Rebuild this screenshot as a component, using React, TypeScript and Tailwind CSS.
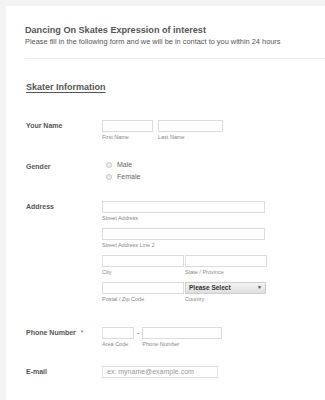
import React from 'react';

const font = { fontFamily: '"Liberation Sans", Arial, sans-serif' };

function Field({ w, label, placeholder }: { w: string; label?: string; placeholder?: string }) {
  return (
    <div className="flex flex-col">
      <div className={`${w} h-[12px] border border-[#dcdcdc] bg-white text-[7px] leading-[10px] px-[4px] text-[#999]`}>
        {placeholder}
      </div>
      {label && <span className="text-[5.5px] leading-[6px] mt-[2px] text-[#888]">{label}</span>}
    </div>
  );
}

function Row({ label, required, children, className }: { label: string; required?: boolean; children: React.ReactNode; className?: string }) {
  return (
    <div className={`flex ${className ?? ''}`}>
      <div className="w-[76px] shrink-0 text-[7px] font-bold text-[#555] leading-[10px] pt-[1px]">
        {label}
        {required && <span className="text-[#e04040] ml-[5px] font-normal">*</span>}
      </div>
      <div>{children}</div>
    </div>
  );
}

export default function App() {
  return (
    <div className="w-[325px] h-[400px] bg-[#f3f3f3] pt-[6px] pl-[6px] overflow-hidden" style={font}>
      <div className="bg-white h-[400px] pl-[19px]">
        <div className="pt-[18px]">
          <h1 className="text-[9.1px] font-bold text-[#555] leading-[12px]">Dancing On Skates Expression of interest</h1>
          <p className="text-[7.4px] text-[#555] leading-[9px] mt-[1px]">
            Please fill in the following form and we will be in contact to you within 24 hours
          </p>
        </div>
        <div className="border-t border-[#eeeeee] mt-[12px]" />
        <div className="mt-[22px] pl-[1px] text-[9px] leading-[12px]">
          <span className="font-bold text-[#555] underline underline-offset-[2px]">Skater Information</span>
        </div>

        <div className="pl-[1px] mt-[27px]">
          <Row label="Your Name">
            <div className="flex gap-[5px]">
              <Field w="w-[51px]" label="First Name" />
              <Field w="w-[65px]" label="Last Name" />
            </div>
          </Row>

          <Row label="Gender" className="mt-[21px]">
            <div className="flex flex-col gap-[3px] pl-[4px] -mt-[1px]">
              {['Male', 'Female'].map((g) => (
                <div key={g} className="flex items-center gap-[5px]">
                  <span className="w-[6px] h-[6px] rounded-full border border-[#c8c8c8] bg-[#eee]" />
                  <span className="text-[7px] text-[#666] leading-[9px]">{g}</span>
                </div>
              ))}
            </div>
          </Row>

          <Row label="Address" className="mt-[20px]">
            <div className="flex flex-col gap-[7px]">
              <Field w="w-[163px]" label="Street Address" />
              <Field w="w-[163px]" label="Street Address Line 2" />
              <div className="flex gap-[1px]">
                <Field w="w-[82px]" label="City" />
                <Field w="w-[82px]" label="State / Province" />
              </div>
              <div className="flex gap-[1px]">
                <Field w="w-[82px]" label="Postal / Zip Code" />
                <div className="flex flex-col">
                  <div className="w-[81px] h-[12px] border border-[#cfcfcf] bg-gradient-to-b from-[#f4f4f4] to-[#dedede] flex items-center justify-between px-[3px]">
                    <span className="text-[6.5px] font-bold text-[#333]">Please Select</span>
                    <span className="text-[5px] text-[#444]">▼</span>
                  </div>
                  <span className="text-[5.5px] leading-[6px] mt-[2px] text-[#888]">Country</span>
                </div>
              </div>
            </div>
          </Row>

          <Row label="Phone Number" required className="mt-[25px]">
            <div className="flex items-start gap-[3px]">
              <Field w="w-[32px]" label="Area Code" />
              <span className="text-[7px] text-[#666] leading-[12px]">-</span>
              <Field w="w-[80px]" label="Phone Number" />
            </div>
          </Row>

          <Row label="E-mail" className="mt-[19px]">
            <Field w="w-[116px]" placeholder="ex: myname@example.com" />
          </Row>
        </div>
      </div>
    </div>
  );
}
